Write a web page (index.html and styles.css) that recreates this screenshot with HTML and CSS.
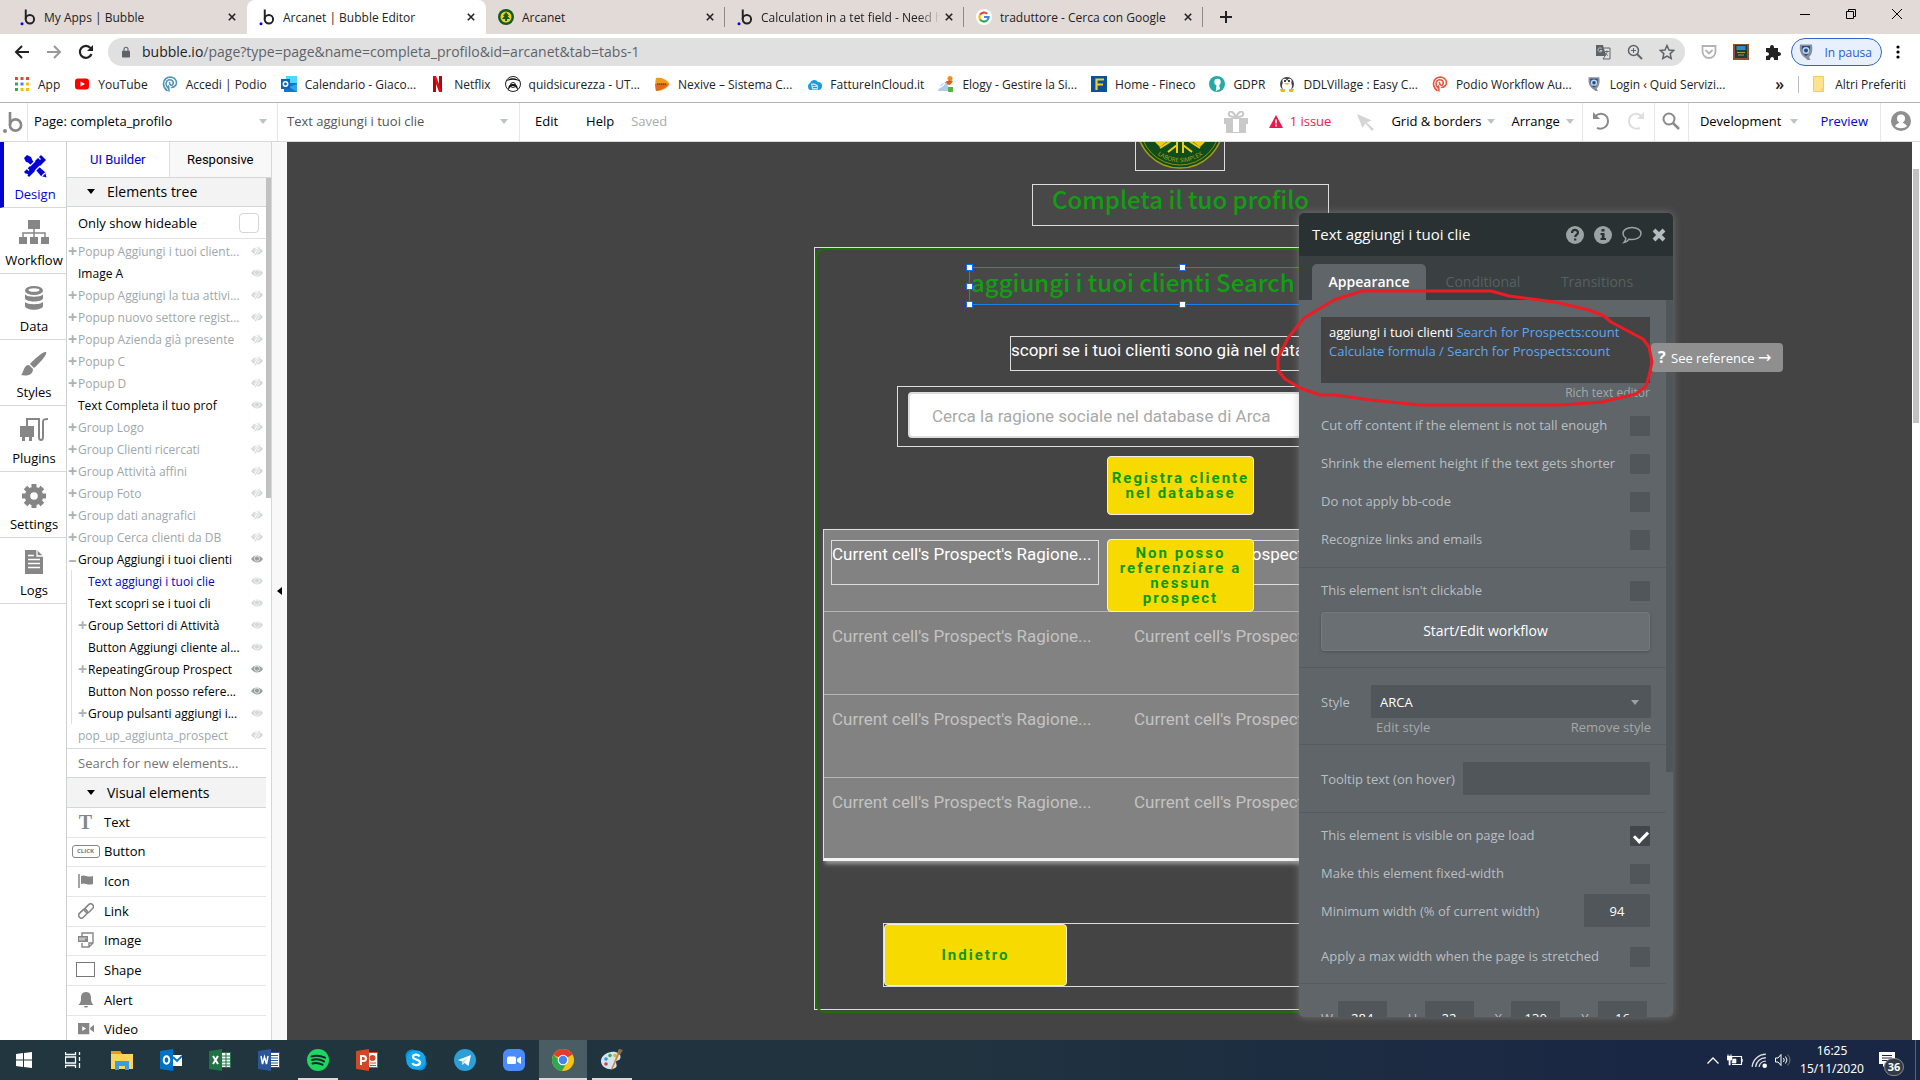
FILE: index.html
```html
<!DOCTYPE html>
<html lang="it">
<head>
  <meta charset="UTF-8">
  <meta name="viewport" content="width=device-width, initial-scale=1.0">
  <title>Arcanet | Bubble Editor</title>
  <link rel="stylesheet" href="styles.css">
</head>
<body>

  <!-- shared icons -->
  <svg class="sprite" width="0" height="0">
    <symbol id="eye" viewBox="0 0 12 8"><path d="M0 4Q2.500.500 6 .5T12 4Q9.500 7.500 6 7.500T0 4Z" fill="currentColor"/><circle cx="6" cy="3.600" r="2.600" fill="none" stroke="#fff" stroke-width=".7"/></symbol>
    <symbol id="eye-off" viewBox="0 0 12 10"><path d="M0 5Q2.500 1.500 6 1.500T12 5Q9.500 8.500 6 8.500T0 5Z" fill="currentColor"/><circle cx="6" cy="4.600" r="2.300" fill="none" stroke="#fff" stroke-width=".8"/><path d="M3.500 10 8.500 0" stroke="#fff" stroke-width="2"/><path d="M4 9.500 8.500.5" stroke="currentColor"/></symbol>
    <symbol id="bubble" viewBox="0 0 20 24"><path d="M7 2v13" stroke="currentColor" stroke-width="2.600" fill="none"/><circle cx="12.500" cy="15" r="5.600" stroke="currentColor" stroke-width="2.600" fill="none"/></symbol>
    <symbol id="podio" viewBox="0 0 16 16"><path d="M5 14.500C.5 11 .5 5 4 2.500S12.500 1 14 4.500 13 11.500 9.500 11.500M6 12C3 9 3.500 5 6.500 4S12 5.500 11 8 7.500 9 7.500 6.500M7 15l-.5-5" fill="none" stroke="currentColor" stroke-width="1.600" stroke-linecap="round"/></symbol>
    <symbol id="shield" viewBox="0 0 16 18"><path d="M2 1.500h12c1 7-.5 10.500-3 12.500l1.500 3h-3L8 15.500C3 12.500 1 8 2 1.500Z" fill="#8a8f96"/><path d="M4 3h8c.5 5-.5 7.500-4 10C4.500 10.500 3.500 8 4 3Z" fill="#2b4a86"/><circle cx="8" cy="7.500" r="2.800" fill="none" stroke="#b8d8f4" stroke-width="1.600"/></symbol>
  </svg>

  <!-- browser -->
  <header class="browser">
    <div class="tab-strip">
      <div class="tab">
        <svg class="fav dark" viewBox="0 0 20 24"><use href="#bubble"/><circle cx="2" cy="21" r="2" fill="#00f"/></svg>
        <span class="tab-title">My Apps | Bubble</span>
        <button class="tab-close" aria-label="Chiudi"><svg viewBox="0 0 10 10"><path d="m1 1 8 8m0-8-8 8"/></svg></button>
      </div>
      <div class="tab active">
        <svg class="fav dark" viewBox="0 0 20 24"><use href="#bubble"/><circle cx="2" cy="21" r="2" fill="#00f"/></svg>
        <span class="tab-title">Arcanet | Bubble Editor</span>
        <button class="tab-close" aria-label="Chiudi"><svg viewBox="0 0 10 10"><path d="m1 1 8 8m0-8-8 8"/></svg></button>
      </div>
      <div class="tab line">
        <svg class="fav" viewBox="0 0 16 16"><circle cx="8" cy="8" r="8" fill="#155a24"/><circle cx="8" cy="8" r="5.500" fill="#f2cf1d"/><path d="M8 3 5 7h1.500L4 10h3v2h2v-2h3L9.500 7H11Z" fill="#155a24"/></svg>
        <span class="tab-title">Arcanet</span>
        <button class="tab-close" aria-label="Chiudi"><svg viewBox="0 0 10 10"><path d="m1 1 8 8m0-8-8 8"/></svg></button>
      </div>
      <div class="tab line">
        <svg class="fav dark" viewBox="0 0 20 24"><use href="#bubble"/><circle cx="2" cy="21" r="2" fill="#00f"/></svg>
        <span class="tab-title fade">Calculation in a tet field - Need h</span>
        <button class="tab-close" aria-label="Chiudi"><svg viewBox="0 0 10 10"><path d="m1 1 8 8m0-8-8 8"/></svg></button>
      </div>
      <div class="tab line">
        <svg class="fav" viewBox="0 0 16 16"><circle cx="8" cy="8" r="8" fill="#fff"/><g fill="none" stroke-width="2.200"><path d="M11.200 4.800A4.600 4.600 0 0 0 4 5.800" stroke="#ea4335"/><path d="M4 5.800a4.600 4.600 0 0 0 0 4.400" stroke="#fbbc05"/><path d="M4 10.200a4.600 4.600 0 0 0 7 1.200" stroke="#34a853"/><path d="M11 11.400A4.600 4.600 0 0 0 12.600 8H8" stroke="#4285f4"/></g></svg>
        <span class="tab-title">traduttore - Cerca con Google</span>
        <button class="tab-close" aria-label="Chiudi"><svg viewBox="0 0 10 10"><path d="m1 1 8 8m0-8-8 8"/></svg></button>
      </div>
      <button class="new-tab" aria-label="Nuova scheda"><svg viewBox="0 0 12 12"><path d="M6 0v12M0 6h12" stroke="#222" stroke-width="2"/></svg></button>
      <div class="window-buttons">
        <button aria-label="Riduci"><svg viewBox="0 0 10 10"><path d="M0 5.500h10"/></svg></button>
        <button aria-label="Ripristina"><svg viewBox="0 0 10 10"><path d="M.5 2.500h7v7h-7ZM2.500 2.500v-2h7v7h-2"/></svg></button>
        <button aria-label="Chiudi"><svg viewBox="0 0 10 10"><path d="m0 0 10 10M10 0 0 10"/></svg></button>
      </div>
    </div>

    <div class="address-row">
      <button class="nav" aria-label="Indietro"><svg viewBox="0 0 16 16"><path d="M15 8H2m6-6L2 8l6 6" fill="none" stroke="#222" stroke-width="2"/></svg></button>
      <button class="nav" aria-label="Avanti"><svg viewBox="0 0 16 16"><path d="M1 8h13M8 2l6 6-6 6" fill="none" stroke="#999" stroke-width="2"/></svg></button>
      <button class="nav" aria-label="Ricarica"><svg viewBox="0 0 16 16"><path d="M13.500 10A6 6 0 1 1 12.500 4" fill="none" stroke="#222" stroke-width="2.200"/><path d="M15 1v6H9Z" fill="#222"/></svg></button>
      <div class="omnibox">
        <svg class="lock" viewBox="0 0 10 14"><path d="M1 5.500h8c.6 0 1 .4 1 1V13c0 .6-.4 1-1 1H1c-.6 0-1-.4-1-1V6.500c0-.6.4-1 1-1Z" fill="#5f6368"/><path d="M2.500 6V3.500a2.500 2.500 0 0 1 5 0V6" fill="none" stroke="#5f6368" stroke-width="1.400"/></svg>
        <p class="url"><b>bubble.io</b>/page?type=page&amp;name=completa_profilo&amp;id=arcanet&amp;tab=tabs-1</p>
        <svg class="ico16" viewBox="0 0 16 16"><path d="M1 1h7l3 11H1Z" fill="#5f6368"/><path d="M9 4h6v11H8l2-3" fill="none" stroke="#5f6368"/><path d="M6.500 4.500a2 2 0 1 0 .5 2H5" fill="none" stroke="#ccc" stroke-width=".9"/><path d="M9.500 7.500H14M12 6.500v1c0 2-1 3-2 4m0-3c1 2 2 2.500 3 3" fill="none" stroke="#5f6368" stroke-width=".9"/></svg>
        <svg class="ico16" viewBox="0 0 16 16"><circle cx="6.500" cy="6.500" r="5" fill="none" stroke="#5f6368" stroke-width="1.500"/><path d="m10 10 5 5" stroke="#5f6368" stroke-width="2"/><path d="M6.500 4v5M4 6.500h5" stroke="#5f6368"/></svg>
        <svg class="ico16" viewBox="0 0 16 16"><path d="m8 1.500 2 4.500 4.800.4-3.600 3.200 1 4.900L8 12l-4.200 2.500 1-4.900L1.200 6.400 6 6Z" fill="none" stroke="#5f6368" stroke-width="1.500"/></svg>
      </div>
      <svg class="ico16 ext" viewBox="0 0 16 16"><path d="M1.500 2h13v5.500a6.500 6.500 0 0 1-13 0Z" fill="none" stroke="#b3b3b3" stroke-width="1.800"/><path d="m4.500 6 3.500 3.500L11.500 6" fill="none" stroke="#b3b3b3" stroke-width="1.800"/></svg>
      <svg class="ico16 ext" viewBox="0 0 16 16"><path d="M0 0h16v16H0Z" fill="#8d5427"/><path d="M2 1h12v13H2Z" fill="#1d3b45"/><path d="M3.500 2h9v4h-9Z" fill="#2e8cc4"/><path d="M4 8.500h8M5 11h6" stroke="#b89a2c"/></svg>
      <svg class="ico16 ext" viewBox="0 0 16 16"><path d="M1 4h4c-.5-4 4.500-4 4 0h4v4c4-.5 4 4.500 0 4v4H9c.5-4-4-4-4 0H1v-4c4 0 4-4 0-4Z" fill="#222"/></svg>
      <button class="profile"><svg viewBox="0 0 16 18"><use href="#shield"/></svg>In pausa</button>
      <button class="dots" aria-label="Menu"><svg viewBox="0 0 4 14"><circle cx="2" cy="2" r="1.600"/><circle cx="2" cy="7" r="1.600"/><circle cx="2" cy="12" r="1.600"/></svg></button>
    </div>

    <nav class="bookmarks">
      <a href="#"><svg viewBox="0 0 16 16"><g fill="#ea4335"><path d="M1 1h3v3H1zM6.500 1h3v3h-3zM12 1h3v3h-3z"/></g><path d="M1 6.500h3v3H1zM1 12h3v3H1z" fill="#34a853"/><path d="M6.500 6.500h3v3h-3z" fill="#4285f4"/><path d="M12 6.500h3v3h-3zM6.500 12h3v3h-3zM12 12h3v3h-3z" fill="#fbbc05"/></svg>App</a>
      <a href="#"><svg viewBox="0 0 16 16"><rect y="2.500" x="1" width="14" height="11" rx="3" fill="#f00"/><path d="m6.500 5.500 4.500 2.500-4.500 2.500Z" fill="#fff"/></svg>YouTube</a>
      <a href="#" class="podio-blue"><svg viewBox="0 0 16 16"><use href="#podio"/></svg>Accedi | Podio</a>
      <a href="#"><svg viewBox="0 0 16 16"><path d="M5 0h11v8H5Z" fill="#50d9ff"/><path d="M3 7h13v9H3Z" fill="#1473c6"/><path d="M16 8v8L8 11Z" fill="#28a8ea"/><path d="M0 3h9v10H0Z" fill="#0f64b5"/><circle cx="4.500" cy="8" r="2.200" fill="none" stroke="#fff" stroke-width="1.500"/></svg>Calendario - Giaco...</a>
      <a href="#"><svg viewBox="0 0 16 16"><path d="M3 0h3v16H3zM9 0h3v16H9z" fill="#b1060f"/><path d="M3 0h3l6 16H9Z" fill="#e50914"/></svg>Netflix</a>
      <a href="#"><svg viewBox="0 0 16 16"><circle cx="8" cy="8" r="7.500" fill="#fff" stroke="#222"/><path d="M1 6C3 1 13 1 15 6c-3-3-11-3-14 0ZM3 15c0-6 2-7 5-7s5 1 5 7c-1-3-3-5-5-5s-4 2-5 5Z" fill="#111"/><circle cx="8" cy="9" r="2.500" fill="none" stroke="#222"/></svg>quidsicurezza - UT...</a>
      <a href="#"><svg viewBox="0 0 16 16"><path d="M2 2c5-1 10 1 13 5v2c-3 4-8 6-13 6C1 10 1 6 2 2Z" fill="#f39a1e"/><path d="M1 8h14c-3 4-8 6-13 7Z" fill="#dd6a1e"/><path d="M3 8h9" stroke="#7b3b10" stroke-width="1.500" stroke-dasharray="1.500 .5"/></svg>Nexive – Sistema C...</a>
      <a href="#"><svg viewBox="0 0 16 16"><path d="M4 14a4 4 0 0 1 0-7 4.500 4.500 0 0 1 8-1 4 4 0 0 1 0 8Z" fill="#1b9cdc"/><path d="M5 7.500h4l3 2v4H6Z" fill="#bfe5f7"/><path d="M6.500 9.500h3M7 11.500h4" stroke="#1b9cdc"/></svg>FattureInCloud.it</a>
      <a href="#"><svg viewBox="0 0 16 16"><circle cx="12" cy="2.500" r="2.500" fill="#f58a1f"/><path d="M6 8c2-4 6-4 9-3l-3 4Z" fill="#e05a1a"/><path d="M0 15c2-7 5-9 9-8l2 8Z" fill="#a9cdea"/><path d="M1 12c4-2 5-3 6-5" stroke="#fff" stroke-width="1.500" fill="none"/><path d="M10 11h5v5h-5Z" fill="#56b33c"/></svg>Elogy - Gestire la Si...</a>
      <a href="#"><svg viewBox="0 0 16 16"><path d="M0 0h16v16H0Z" fill="#0b509b"/><path d="M5.500 14V3.500H13M5.500 8.500H12" fill="none" stroke="#f6cf1c" stroke-width="2.200"/></svg>Home - Fineco</a>
      <a href="#"><svg viewBox="0 0 16 16"><circle cx="8" cy="8" r="8" fill="#27a9a5"/><circle cx="8.500" cy="6" r="3.200" fill="#fff"/><path d="M7.500 8h2.500l1 5-4 2Z" fill="#fff"/></svg>GDPR</a>
      <a href="#"><svg viewBox="0 0 16 16"><circle cx="8" cy="8" r="7" fill="#444"/><ellipse cx="8" cy="10" rx="5" ry="5.500" fill="#fff"/><circle cx="5.500" cy="5" r="2.200" fill="#fff"/><circle cx="10.500" cy="5" r="2.200" fill="#fff"/><circle cx="6" cy="5" r="1"/><circle cx="10" cy="5" r="1"/><path d="M5 7h6l-3 2ZM1 13h5v3H2ZM10 13h5l-1 3h-4Z" fill="#e9b81c"/></svg>DDLVillage : Easy C...</a>
      <a href="#" class="podio-red"><svg viewBox="0 0 16 16"><use href="#podio"/></svg>Podio Workflow Au...</a>
      <a href="#"><svg viewBox="0 0 16 18"><use href="#shield"/></svg>Login ‹ Quid Servizi...</a>
      <span class="more">»</span>
      <a href="#" class="folder"><svg viewBox="0 0 16 16"><path d="M2 0h11v16H2Z" fill="#ffe48d"/><path d="M2.500.5h10v15h-10zM11 12v3" fill="none" stroke="#f0cd5c"/></svg>Altri Preferiti</a>
    </nav>
  </header>

  <!-- bubble top bar -->
  <div class="topbar">
    <a class="logo" href="#" aria-label="Bubble"><svg viewBox="0 0 20 24"><use href="#bubble"/><circle cx="2" cy="21" r="2" fill="currentColor"/></svg></a>
    <button class="picker">Page: completa_profilo<i class="caret"></i></button>
    <button class="picker grey second">Text aggiungi i tuoi clie<i class="caret"></i></button>
    <button class="menu edit">Edit</button>
    <button class="menu">Help</button>
    <span class="saved">Saved</span>
    <div class="topbar-right">
      <svg class="gift" viewBox="0 0 24 22"><path d="M0 7h24v6h-2v9H2v-9H0Z" fill="#c9c9c9"/><path d="M9 8h1v13H9zM14 8h1v13h-1zM10 8h4v13h-4z" fill="#fff"/><path d="M11.500 6C7 6 4 5 5 2s5-1 7 4c2-5 6-7 7-4s-2 4-6.500 4" fill="none" stroke="#c9c9c9" stroke-width="2"/></svg>
      <button class="issue"><svg viewBox="0 0 14 13"><path d="m7 0 7 13H0Z" fill="#f0164c"/><path d="M7 4.500v4M7 9.500v2" stroke="#fff" stroke-width="1.600"/></svg>1 issue</button>
      <svg class="pointer" viewBox="0 0 16 16"><path d="m0 0 14 6-5 2 7 6-2 2-6-7-3 4Z" fill="#d5d5d5"/></svg>
      <button class="menu with-caret">Grid &amp; borders<i class="caret"></i></button>
      <button class="menu with-caret arrange">Arrange<i class="caret"></i></button>
      <button class="cell undo" aria-label="Undo"><svg viewBox="0 0 18 20"><path d="M3 5.500C9 0 16 4 16 10s-6 9-11 7" fill="none" stroke="#8a8a8a" stroke-width="2"/><path d="M1 1v7h7Z" fill="#8a8a8a"/></svg></button>
      <button class="redo" aria-label="Redo"><svg viewBox="0 0 18 20"><path d="M15 5.500C9 0 2 4 2 10s6 9 11 7" fill="none" stroke="#ddd" stroke-width="2"/><path d="M17 1v7h-7Z" fill="#ddd"/></svg></button>
      <button class="cell search" aria-label="Search"><svg viewBox="0 0 18 18"><circle cx="7" cy="7" r="5.500" fill="none" stroke="#8a8a8a" stroke-width="2"/><path d="m11 11 6 6" stroke="#8a8a8a" stroke-width="2.500"/></svg></button>
      <button class="cell with-caret dev">Development<i class="caret"></i></button>
      <a class="preview" href="#">Preview</a>
      <button class="cell avatar" aria-label="Account"><svg viewBox="0 0 20 20"><circle cx="10" cy="10" r="10" fill="#8f8f8f"/><circle cx="10" cy="7.500" r="4" fill="#fff"/><path d="M4 15c1-2 4-2.500 4.500-4h3c.5 1.500 3.500 2 4.500 4-3 3-9 3-12 0Z" fill="#fff"/></svg></button>
    </div>
  </div>

  <main class="editor">
    <nav class="rail">
      <a href="#" class="on"><svg viewBox="0 0 24 24" fill="#0202d2"><path d="m18 1 5 5L6 23l-5-5Z"/><path d="m1 4 3-3 4 2 1.500 3.500L12 9l3 3 7 6 1.500 5.500L18 22l-6-7-3-3-4-3.500L3 8Z"/><path d="m15 3 2.500 2.500M4 14.500 6 16.500M7 12l5-5m0 10 5-5M19 22l3-3M3 20l2 1" stroke="#fff" stroke-width="1.200"/></svg>Design</a>
      <a href="#"><svg viewBox="0 0 30 24" fill="#868686"><path d="M9 0h12v9H9zM0 17h8v7H0zM11 17h8v7h-8zM22 17h8v7h-8z"/><path d="M15 9v8M4 17v-4h22v4" fill="none" stroke="#868686" stroke-width="1.500"/></svg>Workflow</a>
      <a href="#"><svg viewBox="2 0 24 24" fill="#868686"><ellipse cx="14" cy="4.500" rx="9" ry="4.500"/><ellipse cx="14" cy="4" rx="5.500" ry="1.800" fill="#fff"/><path d="M5 8.500c3 3 15 3 18 0v4c-1 4-17 4-18 0zM5 16c3 3 15 3 18 0v4c-1 5-17 5-18 0z"/></svg>Data</a>
      <a href="#"><svg viewBox="0 0 26 24" fill="#868686"><path d="M25 0c2 2-7 12-12 16l-4-4C13 7 23-1 25 0ZM8 13l4 4c0 7-8 7-12 6 3-2 2-10 8-10Z"/></svg>Styles</a>
      <a href="#"><svg viewBox="0 0 28 24" fill="#868686"><path d="M0 8h14v11H0zM2 18h3v5H2zM9 18h3v5H9z"/><path d="M7 8V1h12v18c0 4 4 4 4 0V4c0-3 2-3 5-3" fill="none" stroke="#868686" stroke-width="2"/></svg>Plugins</a>
      <a href="#"><svg viewBox="0 0 24 24"><circle cx="12" cy="12" r="6.500" fill="none" stroke="#868686" stroke-width="5.500"/><path d="M12 0v4M12 20v4M0 12h4M20 12h4M3.500 3.500l3 3M17.500 17.500l3 3M3.500 20.500l3-3M17.500 6.500l3-3" stroke="#868686" stroke-width="5"/></svg>Settings</a>
      <a href="#"><svg viewBox="0 0 24 24"><path d="M3 0h12l6 6v18H3Z" fill="#868686"/><path d="M15 0v6h6M6 9.500h12M6 13.500h12M6 17.500h12M6 5.500h6" fill="none" stroke="#fff" stroke-width="1.300"/></svg>Logs</a>
    </nav>

    <aside class="side">
      <div class="side-tabs">
        <button class="on">UI Builder</button>
        <button>Responsive</button>
      </div>
      <div class="side-scroll">
        <h2><i class="caret black"></i>Elements tree</h2>
        <label class="hideable">Only show hideable<input type="checkbox"></label>
        <ul class="tree">
          <li class="off"><b>+</b><span>Popup Aggiungi i tuoi client...</span><svg><use href="#eye-off"/></svg></li>
          <li><b></b><span>Image A</span><svg><use href="#eye"/></svg></li>
          <li class="off"><b>+</b><span>Popup Aggiungi la tua attivi...</span><svg><use href="#eye-off"/></svg></li>
          <li class="off"><b>+</b><span>Popup nuovo settore regist...</span><svg><use href="#eye-off"/></svg></li>
          <li class="off"><b>+</b><span>Popup Azienda già presente</span><svg><use href="#eye-off"/></svg></li>
          <li class="off"><b>+</b><span>Popup C</span><svg><use href="#eye-off"/></svg></li>
          <li class="off"><b>+</b><span>Popup D</span><svg><use href="#eye-off"/></svg></li>
          <li><b></b><span>Text Completa il tuo prof</span><svg><use href="#eye"/></svg></li>
          <li class="off"><b>+</b><span>Group Logo</span><svg><use href="#eye-off"/></svg></li>
          <li class="off"><b>+</b><span>Group Clienti ricercati</span><svg><use href="#eye-off"/></svg></li>
          <li class="off"><b>+</b><span>Group Attività affini</span><svg><use href="#eye-off"/></svg></li>
          <li class="off"><b>+</b><span>Group Foto</span><svg><use href="#eye-off"/></svg></li>
          <li class="off"><b>+</b><span>Group dati anagrafici</span><svg><use href="#eye-off"/></svg></li>
          <li class="off"><b>+</b><span>Group Cerca clienti da DB</span><svg><use href="#eye-off"/></svg></li>
          <li class="shown"><b>–</b><span>Group Aggiungi i tuoi clienti</span><svg><use href="#eye"/></svg></li>
          <li class="child current"><b></b><span>Text aggiungi i tuoi clie</span><svg><use href="#eye"/></svg></li>
          <li class="child"><b></b><span>Text scopri se i tuoi cli</span><svg><use href="#eye"/></svg></li>
          <li class="child"><b>+</b><span>Group Settori di Attività</span><svg><use href="#eye"/></svg></li>
          <li class="child"><b></b><span>Button Aggiungi cliente al...</span><svg><use href="#eye"/></svg></li>
          <li class="child shown"><b>+</b><span>RepeatingGroup Prospect</span><svg><use href="#eye"/></svg></li>
          <li class="child shown"><b></b><span>Button Non posso refere...</span><svg><use href="#eye"/></svg></li>
          <li class="child"><b>+</b><span>Group pulsanti aggiungi i...</span><svg><use href="#eye"/></svg></li>
          <li class="off"><b></b><span>pop_up_aggiunta_prospect</span><svg><use href="#eye-off"/></svg></li>
        </ul>
        <input class="find" type="text" placeholder="Search for new elements..." aria-label="Search for new elements">
        <h2><i class="caret black"></i>Visual elements</h2>
        <ul class="palette">
          <li><span class="glyph-t">T</span>Text</li>
          <li><span class="glyph-click">CLICK</span>Button</li>
          <li><svg viewBox="0 0 16 14"><path d="M1 0v14" stroke="#868686" stroke-width="1.500"/><path d="M3 2c4-2 6 2 12 0v8c-6 2-8-2-12 0Z" fill="#868686"/></svg>Icon</li>
          <li><svg viewBox="0 0 16 16"><g fill="none" stroke="#868686" stroke-width="1.600"><rect x="6" y="2.500" width="10" height="5.500" rx="2.700" transform="rotate(-45 11 5.200)"/><rect x="0" y="8" width="10" height="5.500" rx="2.700" transform="rotate(-45 5 10.700)"/></g></svg>Link</li>
          <li><svg viewBox="0 0 16 16"><path d="M4 4V1h11v10l-4 4H4v-4M15 11h-4v4" fill="none" stroke="#868686" stroke-width="1.400"/><path d="M0 4h10v6H0Z" fill="#868686"/><path d="M2 5.500v3m2-3v3m2-3v3m2-3v1" stroke="#fff"/></svg>Image</li>
          <li><span class="glyph-box"></span>Shape</li>
          <li><svg viewBox="0 0 16 16"><path d="M8 0c4 0 5 3 5 6 0 4 1 5 2.500 7H.5C2 11 3 10 3 6c0-3 1-6 5-6ZM6 14h4c0 2-4 2-4 0Z" fill="#868686"/></svg>Alert</li>
          <li><svg viewBox="0 0 17 14"><path d="M0 1h12v12H0zM13 6l4-3v8l-4-3Z" fill="#868686"/><path d="m4.500 4.500 4 2.500-4 2.500Z" fill="#fff"/></svg>Video</li>
        </ul>
      </div>
    </aside>
    <button class="collapse" aria-label="Collapse"></button>

    <section class="canvas">
      <!-- page elements, placed freely -->
      <div class="el box-logo">
        <svg viewBox="0 0 88 88"><circle cx="44" cy="44" r="43" fill="#0f4d1c" stroke="#a89a12" stroke-width="1.500"/><circle cx="44" cy="44" r="40" fill="none" stroke="#8f8d14"/><path d="M18 60h14l-8 6ZM70 60H56l8 6Z" fill="#f2c914"/><path d="M41 58v14M47 58v14M41 64l-9 7m15-7 9 7M38 58l-14 9m26-9 14 9" stroke="#f2c914" stroke-width="2" fill="none"/><path id="motto" d="M11 62a38 38 0 0 0 66 0" fill="none"/><text><textPath href="#motto" startOffset="50%">LABORE SIMPLEX</textPath></text></svg>
      </div>
      <h1 class="el box-title">Completa il tuo profilo</h1>
      <div class="el box-group"></div>
      <div class="el box-selected">aggiungi i tuoi clienti Search f
        <i class="knob nw"></i><i class="knob n"></i><i class="knob w"></i><i class="knob sw"></i><i class="knob s"></i>
      </div>
      <p class="el box-scopri">scopri se i tuoi clienti sono già nel data</p>
      <div class="el box-search"><input type="text" placeholder="Cerca la ragione sociale nel database di Arca" aria-label="Cerca"></div>
      <button class="el yellow box-registra">Registra cliente nel database</button>
      <div class="el box-repeat">
        <div class="cells first"><p>Current cell's Prospect's Ragione...</p><p>Current cell's Prospect's Ragione...</p></div>
        <div class="cells"><p>Current cell's Prospect's Ragione...</p><p>Current cell's Prospect's Ragione...</p></div>
        <div class="cells"><p>Current cell's Prospect's Ragione...</p><p>Current cell's Prospect's Ragione...</p></div>
        <div class="cells"><p>Current cell's Prospect's Ragione...</p><p>Current cell's Prospect's Ragione...</p></div>
      </div>
      <button class="el yellow box-nonposso">Non posso referenziare a nessun prospect</button>
      <div class="el box-actions"><button class="yellow">Indietro</button></div>

      <!-- property editor -->
      <section class="props">
        <header>
          <h3>Text aggiungi i tuoi clie</h3>
          <svg viewBox="0 0 18 18"><circle cx="9" cy="9" r="9" fill="#9ba3a6"/><path d="M6 7c0-4 6-4 6-.5C12 9 9.200 8.500 9.200 11M9.200 12.500v2" fill="none" stroke="#293133" stroke-width="2.200"/></svg>
          <svg viewBox="0 0 18 18"><circle cx="9" cy="9" r="9" fill="#9ba3a6"/><path d="M7.500 3h3v2.500h-3zM6.500 7h4v5H12v2H6.500v-2h1.300V9H6.500Z" fill="#293133"/></svg>
          <svg class="balloon" viewBox="0 0 20 18"><path d="M10 1.500c5 0 9 2.500 9 6s-4 6-9 6c-1 0-2 0-3-.3-1 1.800-3 3-5 3.300 1-1 1.800-2.500 1.800-4.300C2 11 1 9.500 1 7.500c0-3.500 4-6 9-6Z" fill="none" stroke="#9ba3a6" stroke-width="1.500"/></svg>
          <button aria-label="Close"><svg viewBox="0 0 14 14"><path d="m2 2 10 10M12 2 2 12" stroke="#b5bcbf" stroke-width="4"/></svg></button>
        </header>
        <div class="props-tabs">
          <button class="on">Appearance</button>
          <button>Conditional</button>
          <button>Transitions</button>
        </div>
        <div class="props-body">
          <div class="group">
            <div class="composer" role="textbox" contenteditable="true" spellcheck="false">aggiungi i tuoi clienti <span>Search for Prospects:count<br>Calculate formula / Search for Prospects:count</span></div>
            <a class="rich" href="#">Rich text editor</a>
            <label class="row">Cut off content if the element is not tall enough<input type="checkbox"></label>
            <label class="row">Shrink the element height if the text gets shorter<input type="checkbox"></label>
            <label class="row">Do not apply bb-code<input type="checkbox"></label>
            <label class="row">Recognize links and emails<input type="checkbox"></label>
          </div>
          <div class="group click">
            <label class="row">This element isn't clickable<input type="checkbox"></label>
            <button class="workflow">Start/Edit workflow</button>
          </div>
          <div class="group style">
            <div class="field"><label for="style">Style</label>
              <span class="select"><select id="style"><option>ARCA</option></select><i class="caret"></i></span></div>
            <div class="links"><a href="#">Edit style</a><a href="#">Remove style</a></div>
          </div>
          <div class="group tooltip">
            <div class="field"><label for="tip">Tooltip text (on hover)</label><input id="tip" type="text"></div>
          </div>
          <div class="group visible">
            <label class="row">This element is visible on page load<input type="checkbox" checked></label>
            <label class="row">Make this element fixed-width<input type="checkbox"></label>
            <label class="row">Minimum width (% of current width)<input type="text" value="94"></label>
            <label class="row last">Apply a max width when the page is stretched<input type="checkbox"></label>
          </div>
          <div class="group size">
            <label>W<input type="text" value="284"></label>
            <label>H<input type="text" value="22"></label>
            <label>X<input type="text" value="130"></label>
            <label>Y<input type="text" value="16"></label>
          </div>
        </div>
      </section>
      <a class="reference" href="#"><b>?</b> See reference <span>→</span></a>
      <!-- hand-drawn highlight -->
      <svg class="scribble" viewBox="0 0 380 124"><path d="M87 5h129l18 5 46 6 34 8 15 6 7 6 32 17 6 8 3 15-3 14-3 10-10 8-34 8-40 3H145l-50-5-35-5H45l-20-7-15-9-7-9V72l10-20 16-20 30-18Z" fill="none" stroke="#ed1c24" stroke-width="3" stroke-linejoin="round"/></svg>
    </section>
    <div class="page-scroll"><span></span></div>
  </main>

  <footer class="taskbar">
    <button aria-label="Start"><svg viewBox="0 0 16 16"><path d="m0 2 7-1v6.500H0zM8 1l8-1v7.500H8zM0 8.500h7V15l-7-1zM8 8.500h8V16l-8-1z" fill="#fff"/></svg></button>
    <button aria-label="Task view"><svg viewBox="0 0 16 16"><path d="M.5 0v2.500h10V0M.5 16v-2.500h10V16M.5 5h10v6H.5ZM14.500 0v3M14.500 5v4M14.500 11v5" fill="none" stroke="#fff" stroke-width="1.300"/></svg></button>
    <button aria-label="Explorer"><svg class="big" viewBox="0 0 22 20"><path d="M0 1h9l2 3h11v15H0Z" fill="#ffd45e"/><path d="M0 1h9l2 3H0Z" fill="#dba21a"/><path d="M4 20v-9h14v9h-4v-4H8v4Z" fill="#3d9be0"/></svg></button>
    <button aria-label="Outlook"><svg class="big" viewBox="0 0 22 22"><path d="M11 6h11v11H11Z" fill="#fff"/><path d="m13 8 4 4 5-5" fill="none" stroke="#0072c6" stroke-width="1.800"/><path d="m0 2 13-2v22L0 20Z" fill="#0072c6"/><ellipse cx="6.500" cy="11" rx="2.800" ry="3.700" fill="none" stroke="#fff" stroke-width="2"/></svg></button>
    <button aria-label="Excel"><svg class="big" viewBox="0 0 22 22"><path d="M12 3.500h9.500v15H12Z" fill="#fff" stroke="#217346"/><path d="M13 7h8M13 10h8M13 13h8M13 16h8M17 4v14" stroke="#217346"/><path d="m0 2 13-2v22L0 20Z" fill="#217346"/><path d="m4 7 5 8M9 7l-5 8" stroke="#fff" stroke-width="2"/></svg></button>
    <button aria-label="Word"><svg class="big" viewBox="0 0 22 22"><path d="M12 3.500h9.500v15H12Z" fill="#fff" stroke="#2b579a"/><path d="M13 6.500h7M13 9h7M13 11.500h7M13 14h7M13 16.500h7" stroke="#2b579a"/><path d="m0 2 13-2v22L0 20Z" fill="#2b579a"/><path d="m3 7 1.500 8L6.500 8l2 7L10 7" fill="none" stroke="#fff" stroke-width="1.500"/></svg></button>
    <button class="running" aria-label="Spotify"><svg class="big" viewBox="0 0 22 22"><circle cx="11" cy="11" r="11" fill="#1ed760"/><path d="M4.500 7.500c5-1.500 9-1 13.500 1.200M5 11c4-1.200 8-.8 12 1.400M5.500 14.500c4-1 6.500-.5 10 1.200" fill="none" stroke="#12252b" stroke-width="2" stroke-linecap="round"/></svg></button>
    <button aria-label="PowerPoint"><svg class="big" viewBox="0 0 22 22"><path d="M12 3.500h9.500v15H12Z" fill="#fff" stroke="#d24726"/><circle cx="16.500" cy="9" r="3" fill="#d24726"/><path d="M14 14h6M14 16.500h6" stroke="#d24726"/><path d="m0 2 13-2v22L0 20Z" fill="#d24726"/><path d="M5 16V7h2c4 0 4 5 0 5H5" fill="none" stroke="#fff" stroke-width="2"/></svg></button>
    <button aria-label="Skype"><svg class="big" viewBox="0 0 22 22"><circle cx="7" cy="7" r="6.500" fill="#0a8fd6"/><circle cx="15" cy="15" r="6.500" fill="#0a8fd6"/><circle cx="11" cy="11" r="9.800" fill="#13a9ee"/><path d="M14.500 7.500c-1-2.500-6.500-2.500-6.500.5s7 2 7 5.500-6.500 3.500-7.500.5" fill="none" stroke="#fff" stroke-width="2.300"/></svg></button>
    <button aria-label="Telegram"><svg class="big" viewBox="0 0 22 22"><circle cx="11" cy="11" r="11" fill="#2c9fd9"/><path d="m4 11 13-5-2.500 11-4-3-2 2-.5-3.500Z" fill="#fff"/><path d="m8 12.500 6-4-4 5-1.500 2.500Z" fill="#bcd9ea"/></svg></button>
    <button aria-label="Zoom"><svg class="big" viewBox="0 0 22 22"><rect width="22" height="22" rx="6" fill="#4a8cff"/><rect x="4" y="7.500" width="9" height="7.500" rx="1.500" fill="#fff"/><path d="m14 10 4-2.500V15l-4-2.500Z" fill="#fff"/></svg></button>
    <button class="running focus" aria-label="Chrome"><svg class="big" viewBox="0 0 22 22"><circle cx="11" cy="11" r="11" fill="#fbc116"/><path d="M11 11 1.500 5.500a11 11 0 0 1 19 0Z" fill="#e33b2e"/><path d="M11 11H7L1.500 5.500A11 11 0 0 0 10 22l4.500-8Z" fill="#2da94f"/><circle cx="11" cy="11" r="5.300" fill="#fff"/><circle cx="11" cy="11" r="4.200" fill="#4285f4"/></svg></button>
    <button class="running" aria-label="Paint"><svg class="big" viewBox="0 0 22 22"><path d="M10 3c7-1 11 3 9 7-1 2-4 1-4 3s2 4-1 6c-5 3-13 0-14-6C-.5 8 4 4 10 3Z" fill="#cfe6f4"/><circle cx="5" cy="10" r="1.800" fill="#3c8fd6"/><circle cx="9" cy="6.500" r="1.800" fill="#45a845"/><circle cx="14" cy="6.500" r="1.800" fill="#e3b71c"/><circle cx="5" cy="15" r="1.800" fill="#d6423c"/><path d="m20 1-6 14-3 6-1-1 3-7 5-13Z" fill="#d98532"/><path d="m18 0 4 1-3 5-2-1Z" fill="#8b6a4c"/></svg></button>
    <div class="tray">
      <svg class="chev" viewBox="0 0 12 7"><path d="m.5 6.500 5.500-5.500 5.500 5.500" fill="none" stroke="#fff" stroke-width="1.300"/></svg>
      <svg viewBox="0 0 16 12"><path d="M5 2.500h9.500v8H5M16 5v3" fill="none" stroke="#fff" stroke-width="1.200"/><path d="M6 5h3v4H5ZM0 2h5v4H3.200v5H2V6H0ZM1 0v3M4 0v3" fill="#fff" stroke="#fff" stroke-width=".6"/></svg>
      <svg viewBox="0 0 14 14"><g fill="none" stroke="#ddd" stroke-width="1.200"><path d="M1 13A12 12 0 0 1 13 2M4 13a9 9 0 0 1 9-8M7 13a6 6 0 0 1 6-5"/></g><circle cx="12" cy="12" r="2" fill="#fff"/></svg>
      <svg viewBox="0 0 16 12"><path d="M.5 4v4H3l3 3.500V.5L3 4Z" fill="none" stroke="#fff"/><path d="M8.500 4q1.500 2 0 4M10.500 2.500q3 3.500 0 7" fill="none" stroke="#fff"/><path d="M12.500.5q5 5.500 0 11" fill="none" stroke="#778"/></svg>
      <p class="clock">16:25<br>15/11/2020</p>
      <div class="notes"><svg viewBox="0 0 16 16"><path d="M0 0h16v12H7l-3 3v-3H0Z" fill="#fff"/><path d="M3 3.500h10M3 6h10M3 8.500h10" stroke="#1a2744"/></svg><span>36</span></div>
    </div>
  </footer>
</body>
</html>
```
FILE: styles.css
```css
* {
  box-sizing: border-box;
}

body {
  margin: 0;
  height: 100vh;
  overflow: hidden;
  display: flex;
  flex-direction: column;
  font-family: "Open Sans", "Noto Sans", sans-serif;
  font-size: 13px;
  color: #000;
  background: #fff;
}

button {
  border: none;
  background: none;
  padding: 0;
  margin: 0;
  font: inherit;
  color: inherit;
  white-space: nowrap;
}

input,
select {
  font: inherit;
  margin: 0;
}

a {
  color: inherit;
  text-decoration: none;
}

h1, h2, h3, p, ul {
  margin: 0;
  padding: 0;
  list-style: none;
  font-weight: 400;
}

svg {
  display: block;
  flex: none;
}

.sprite {
  position: absolute;
}

.caret {
  flex: none;
  border: 4px solid transparent;
  border-top: 5px solid #b9c3c8;
  border-bottom: 0;
}

.caret.black {
  border-top-color: #000;
}

/* Browser tabs */
.browser {
  font-size: 12px;
  border-bottom: 1px solid #b3b3b3;
}

.tab-strip {
  display: flex;
  height: 34px;
  padding-left: 8px;
  background: #e2dad7;
}

.tab {
  display: flex;
  align-items: center;
  width: 239px;
  padding: 0 6px 0 12px;
  position: relative;
}

.tab.active {
  background: #fff;
  border-radius: 8px 8px 0 0;
}

.tab.line::after {
  content: "";
  position: absolute;
  right: 0;
  top: 7px;
  height: 20px;
  border-right: 1px solid #8e8a88;
}

.fav {
  width: 16px;
  height: 18px;
  margin-right: 8px;
}

.dark {
  color: #222;
}

.tab-title {
  flex: 1;
  overflow: hidden;
  white-space: nowrap;
  color: #222;
}

.tab-title.fade {
  mask-image: linear-gradient(90deg, #000 88%, transparent);
}

.tab-close {
  width: 18px;
}

.tab-close svg {
  width: 8px;
  margin: auto;
  stroke: #222;
  stroke-width: 2;
}

.new-tab {
  width: 46px;
}

.new-tab svg {
  width: 12px;
  margin: auto;
}

.window-buttons {
  display: flex;
  margin-left: auto;
}

.window-buttons button {
  width: 46px;
  padding-bottom: 6px;
}

.window-buttons svg {
  width: 10px;
  margin: auto;
  fill: none;
  stroke: #000;
}

/* Address bar */
.address-row {
  display: flex;
  align-items: center;
  height: 36px;
  padding: 0 20px 0 6px;
}

.nav {
  width: 32px;
}

.nav svg {
  width: 16px;
  margin: auto;
}

.omnibox {
  flex: 1;
  display: flex;
  align-items: center;
  height: 28px;
  margin-left: 6px;
  padding: 0 10px 0 14px;
  border-radius: 14px;
  background: #e0e0e0;
}

.lock {
  width: 8px;
  height: 12px;
}

.url {
  flex: 1;
  margin-left: 12px;
  padding-bottom: 1px;
  font-size: 14px;
  color: #5f6368;
}

.url b {
  font-weight: 400;
  color: #222;
}

.ico16 {
  width: 16px;
  height: 16px;
  margin-left: 16px;
}

.profile {
  display: flex;
  align-items: center;
  gap: 10px;
  height: 28px;
  margin: 0 14px 0 10px;
  padding: 0 9px 0 6px;
  border: 1px solid #2a66cc;
  border-radius: 14px;
  background: #e8f0fe;
  color: #1d5fd0;
}

.profile svg {
  width: 16px;
}

.dots svg {
  width: 4px;
}

/* Bookmarks */
.bookmarks {
  display: flex;
  align-items: center;
  gap: 14px;
  height: 32px;
  padding: 0 14px;
  padding-bottom: 4px;
  color: #222;
  white-space: nowrap;
}

.bookmarks a {
  display: flex;
  align-items: center;
  gap: 8px;
}

.bookmarks svg {
  width: 16px;
  height: 16px;
}

.podio-blue svg {
  color: #4e94b8;
}

.podio-red svg {
  color: #e8563f;
}

.more {
  margin-left: auto;
  font-size: 16px;
  font-weight: 600;
}

.bookmarks .folder {
  padding-left: 12px;
  border-left: 1px solid #bbb;
}

/* Editor top bar */
.topbar {
  display: flex;
  align-items: stretch;
  height: 39px;
  border-bottom: 1px solid #d6dadb;
}

.logo {
  display: flex;
  align-items: center;
  width: 28px;
  padding-left: 3px;
  color: #888;
  border-right: 1px solid #e4e6e7;
}

.logo svg {
  width: 20px;
}

.topbar button,
.preview,
.saved {
  padding-bottom: 2px;
}

.picker {
  display: flex;
  align-items: center;
  justify-content: space-between;
  width: 250px;
  padding: 0 10px 0 6px;
  border-right: 1px solid #e4e6e7;
}

.picker.second {
  width: 242px;
  padding-left: 9px;
  padding-right: 11px;
}

.grey {
  color: #555;
}

.menu {
  padding: 0 0 0 28px;
}

.menu.edit {
  padding-left: 15px;
}

.saved {
  align-self: center;
  margin-left: 17px;
  color: #aaa;
}

.topbar-right {
  display: flex;
  align-items: center;
  margin-left: auto;
}

.topbar-right button {
  height: 100%;
}

.gift {
  width: 24px;
  margin-right: 21px;
}

.issue {
  display: flex;
  align-items: center;
  gap: 7px;
  color: #f0164c;
}

.issue svg {
  width: 14px;
}

.pointer {
  width: 17px;
  margin: 0 17px 0 26px;
}

.menu.with-caret {
  padding-left: 0;
}

.with-caret {
  display: flex;
  align-items: center;
  gap: 6px;
}

.menu.arrange {
  margin: 0 8px 0 16px;
}

.cell {
  border-left: 1px solid #e4e6e7;
}

.undo {
  width: 37px;
}

.redo {
  width: 35px;
}

.undo svg,
.redo svg,
.search svg {
  width: 18px;
  margin: auto;
}

.search {
  width: 34px;
}

.topbar .dev {
  padding: 0 20px 2px 11px;
  gap: 9px;
}

.preview {
  padding-left: 2px;
  padding-right: 12px;
  color: #0202d2;
}

.avatar {
  width: 40px;
}

.avatar svg {
  width: 20px;
  margin: auto;
}

/* Editor */
.editor {
  flex: 1;
  min-height: 0;
  display: flex;
}

.rail {
  width: 67px;
  border-right: 1px solid #ccd0d2;
}

.rail a {
  display: flex;
  flex-direction: column;
  align-items: center;
  gap: 6px;
  height: 66px;
  padding: 12px 0 0 2px;
  border-bottom: 1px solid #d5d8d9;
  line-height: 20px;
}

.rail svg {
  height: 24px;
}

.rail .on {
  padding-left: 0;
  color: #0202d2;
  border-left: 4px solid #0202d2;
}

.side {
  display: flex;
  flex-direction: column;
  flex: none;
  width: 205px;
  border-right: 1px solid #d5d8d9;
}

.side-tabs {
  display: flex;
  height: 36px;
  flex: none;
  border-bottom: 1px solid #d5d8d9;
  font-family: Roboto, sans-serif;
}

.side-tabs button {
  flex: 1;
  background: #f8f8f8;
  border-left: 1px solid #e2e2e2;
}

.side-tabs .on {
  background: #fff;
  border-left: none;
  color: #0202d2;
}

.side-scroll {
  flex: 1;
  min-height: 0;
  overflow: hidden;
  padding-right: 5px;
  /* scrollbar thumb */
  background: linear-gradient(#c1c1c1, #c1c1c1) right top / 5px 320px no-repeat;
}

.side h2 {
  display: flex;
  align-items: center;
  gap: 12px;
  height: 29px;
  padding: 0 0 1px 20px;
  font-size: 14px;
  background: #f3f3f3;
  border-bottom: 1px solid #d5d8d9;
}

.hideable {
  display: flex;
  align-items: center;
  justify-content: space-between;
  height: 32px;
  padding: 0 7px 0 11px;
  border-bottom: 1px solid #e0e0e0;
}

.hideable input {
  appearance: none;
  width: 20px;
  height: 20px;
  border: 1px solid #d5d5d5;
  border-radius: 4px;
}

.tree {
  padding: 1px 0 2px;
  font-size: 12px;
  border-bottom: 1px solid #d5d8d9;
}

.tree li {
  display: flex;
  align-items: center;
  height: 22px;
  padding-right: 3px;
  white-space: nowrap;
}

.tree b {
  width: 11px;
  text-align: center;
  font-size: 16px;
  line-height: 18px;
  color: #aab2b5;
}

.tree span {
  flex: 1;
}

.tree svg {
  width: 12px;
  height: 10px;
  color: #d5d8d9;
}

.tree .off {
  color: #9ea7aa;
}

.tree .shown svg {
  color: #9a9f9f;
}

.tree .child {
  margin-left: 4px;
  padding-left: 5px;
  border-left: 1px solid #e0e0e0;
}

.tree .current {
  color: #0202d2;
}

.find {
  display: block;
  width: 100%;
  height: 29px;
  padding: 0 11px;
  border: none;
  border-bottom: 1px solid #d5d8d9;
}

.find::placeholder {
  color: #757575;
}

.side .find + h2 {
  height: 30px;
}

.palette li {
  display: grid;
  grid-template-columns: 37px 1fr;
  align-items: center;
  height: 30px;
  padding-bottom: 2px;
  border-bottom: 1px solid #e4e6e7;
}

.palette li:nth-child(3n + 2) {
  height: 29px;
}

.palette svg,
.palette span {
  justify-self: center;
}

.palette svg {
  width: 16px;
}

.glyph-t {
  font: bold 20px/20px "Liberation Serif", serif;
  color: #868686;
}

.glyph-click {
  width: 28px;
  height: 13px;
  border: 1px solid #868686;
  border-radius: 3px;
  font-size: 6px;
  font-weight: 700;
  line-height: 11px;
  text-align: center;
  color: #777;
}

.glyph-box {
  width: 19px;
  height: 15px;
  border: 1px solid #777;
}

.collapse {
  display: flex;
  align-items: center;
  justify-content: center;
  flex: none;
  width: 15px;
  background: #f8f8f8;
}

.collapse::before {
  content: "";
  border: 4px solid transparent;
  border-right: 5px solid #000;
  border-left: 0;
}

/* Canvas */
.canvas {
  flex: 1;
  position: relative;
  overflow: hidden;
  background: #444;
}

.el {
  position: absolute;
  border: 1px solid #ddd;
}

.box-logo {
  left: 848px;
  top: -62px;
  width: 90px;
  height: 91px;
}

.box-logo svg {
  width: 88px;
  margin: auto;
}

.box-logo text {
  font-size: 6px;
  text-anchor: middle;
  fill: #b3ab1a;
}

.box-title,
.box-selected {
  font-family: "Noto Sans CJK SC", sans-serif;
  font-size: 24px;
  line-height: 27px;
  font-weight: 500;
  color: #119f11;
  white-space: nowrap;
}

.box-title {
  left: 745px;
  top: 42px;
  width: 297px;
  height: 42px;
  text-align: center;
  background: #484848;
}

.box-group {
  left: 527px;
  top: 105px;
  width: 733px;
  height: 763px;
}

.box-group::before {
  content: "";
  display: block;
  height: 100%;
  border: 2px solid #1a7300;
  border-radius: 10px;
}

.box-selected {
  left: 682px;
  top: 125px;
  width: 427px;
  height: 38px;
  padding-left: 1px;
  background: #484848;
  border-color: #1a80e6;
}

.knob {
  position: absolute;
  width: 7px;
  height: 7px;
  border: 1px solid #0a6cff;
  background: #fff;
}

.nw, .n { top: -4px; }
.sw, .s { bottom: -4px; }
.w { top: 15px; }
.nw, .w, .sw { left: -4px; }
.n, .s { left: 209px; }

.box-scopri,
.box-search,
.box-repeat {
  font-family: Roboto, sans-serif;
  font-size: 17px;
  color: #fff;
  white-space: nowrap;
}

.box-scopri {
  left: 723px;
  top: 194px;
  width: 341px;
  height: 35px;
  line-height: 26px;
  overflow: hidden;
}

.box-search {
  left: 610px;
  top: 244px;
  width: 560px;
  height: 61px;
  padding: 5px 10px;
}

.box-search input {
  width: 100%;
  height: 46px;
  padding: 2px 22px 0;
  border: 2px solid #ddd;
  border-radius: 4px;
  background: #fff;
}

.box-search input::placeholder {
  color: #a9a9a9;
}

.yellow {
  padding: 0;
  background: #f7da00;
  color: #0a9a10;
  border: 1px solid #eee;
  border-radius: 4px;
  font: 700 15px/15px Roboto, sans-serif;
  letter-spacing: 2px;
  white-space: normal;
  text-align: center;
}

.box-registra {
  left: 820px;
  top: 314px;
  width: 147px;
  height: 59px;
}

.box-nonposso {
  left: 820px;
  top: 397px;
  width: 147px;
  height: 73px;
  padding: 0 6px;
}

.box-repeat {
  left: 536px;
  top: 387px;
  width: 700px;
  height: 332px;
  background: #828282;
  border-bottom: 3px solid #f3f3f3;
  box-shadow: 2px 3px 4px #999;
}

.cells {
  display: flex;
  gap: 34px;
  height: 83px;
  padding: 10px 7px;
  border-bottom: 1px solid #b5b5b5;
  color: #c3c3c3;
}

.cells:last-child {
  border-bottom: none;
}

.cells p {
  width: 268px;
  height: 45px;
  line-height: 26px;
  border: 1px solid transparent;
  overflow: hidden;
}

.cells.first {
  height: 82px;
  color: #fff;
}

.cells.first p {
  border-color: #ddd;
}

.box-actions {
  left: 596px;
  top: 781px;
  width: 560px;
  height: 64px;
}

.box-actions button {
  width: 183px;
  height: 62px;
}

/* Property editor */
.props {
  position: absolute;
  left: 1012px;
  top: 71px;
  bottom: 23px;
  width: 374px;
  display: flex;
  flex-direction: column;
  overflow: hidden;
  border-radius: 5px;
  background: #5f6569;
  color: #b9bfc1;
  box-shadow: 0 0 8px rgba(160, 160, 160, 0.5);
}

.props header {
  display: flex;
  align-items: center;
  gap: 10px;
  flex: none;
  height: 43px;
  padding: 0 7px 0 13px;
  background: #293133;
}

.props h3 {
  flex: 1;
  padding-bottom: 2px;
  font-size: 15px;
  color: #fff;
}

.props header svg {
  width: 18px;
}

.props header .balloon {
  width: 20px;
}

.props header button svg {
  width: 14px;
}

.props-tabs {
  display: flex;
  flex: none;
  height: 44px;
  padding: 8px 13px 0;
  background: #3a4042;
  font-size: 14px;
  color: #595f61;
}

.props-tabs button {
  width: 114px;
  padding-bottom: 2px;
  border-radius: 5px 5px 0 0;
}

.props-tabs .on {
  background: #5f6569;
  color: #fff;
  font-weight: 600;
}

.props-body {
  flex: 1;
  min-height: 0;
  overflow: hidden;
  padding-right: 7px;
  background: linear-gradient(#50565a, #50565a) right top / 7px 472px no-repeat;
}

.group {
  padding: 17px 16px 8px 22px;
  border-bottom: 1px solid #555b5f;
}

.composer {
  height: 66px;
  padding: 6px 8px;
  background: #444;
  color: #fff;
  font-size: 13px;
  line-height: 19px;
  white-space: nowrap;
  overflow: hidden;
}

.composer span {
  color: #5ba8f5;
}

.rich {
  display: block;
  height: 24px;
  font-size: 12px;
  line-height: 20px;
  text-align: right;
  color: #a3a9ab;
}

.row {
  display: flex;
  align-items: center;
  justify-content: space-between;
  height: 38px;
  padding-bottom: 3px;
  white-space: nowrap;
}

.props input,
.props select {
  height: 33px;
  border: none;
  border-radius: 1px;
  background: #50565a;
  color: #fff;
}

.props input[type="checkbox"] {
  appearance: none;
  width: 20px;
  height: 20px;
  margin-top: 2px;
}

.row.last {
  margin-top: 7px;
}

.props input:checked {
  background: #41474b;
}

.props input:checked::before {
  content: "";
  display: block;
  width: 11px;
  height: 6px;
  margin: 5px 0 0 4px;
  border: solid #fff;
  border-width: 0 0 3px 3px;
  transform: rotate(-45deg);
}

.row input[type="text"] {
  width: 66px;
  text-align: center;
}

.group.click {
  padding-top: 4px;
  padding-bottom: 16px;
}

.workflow {
  display: block;
  width: 100%;
  height: 39px;
  margin-top: 2px;
  padding-bottom: 2px;
  border: 1px solid #74797c;
  border-radius: 3px;
  background: #6a6f73;
  box-shadow: 0 1px 3px rgba(0, 0, 0, 0.2);
  font-size: 14px;
  color: #fff;
}

.group.style {
  padding-right: 15px;
  padding-bottom: 6px;
}

.field {
  display: flex;
  align-items: center;
  gap: 8px;
  white-space: nowrap;
}

.select {
  position: relative;
  width: 280px;
  margin-left: auto;
}

.select select {
  appearance: none;
  width: 100%;
  padding: 0 9px;
}

.select .caret {
  position: absolute;
  right: 12px;
  top: 15px;
  border-top-color: #9aa1a5;
}

.links {
  display: flex;
  justify-content: space-between;
  padding-left: 55px;
  line-height: 19px;
  padding-bottom: 1px;
  color: #a3a9ab;
}

.group.tooltip {
  padding-bottom: 17px;
}

.tooltip input {
  flex: 1;
  min-width: 0;
}

.group.visible {
  padding-top: 4px;
  padding-bottom: 7px;
}

.group.size {
  display: flex;
  gap: 21px;
  padding-right: 19px;
}

.size label {
  display: flex;
  flex: 1;
  align-items: center;
  justify-content: space-between;
}

.size input {
  width: 49px;
  text-align: center;
}

.reference {
  position: absolute;
  left: 1364px;
  top: 201px;
  height: 29px;
  padding: 0 12px 0 7px;
  border-radius: 4px;
  background: #8f8f8f;
  color: #fff;
  line-height: 28px;
  white-space: nowrap;
}

.reference b {
  margin-right: 2px;
  font-size: 16px;
}

.reference span {
  font-family: "DejaVu Sans", sans-serif;
  font-size: 16px;
}

.scribble {
  position: absolute;
  left: 988px;
  top: 144px;
  width: 380px;
  height: 124px;
  pointer-events: none;
}

.page-scroll {
  width: 8px;
  padding-top: 27px;
  background: #fff;
}

.page-scroll span {
  display: block;
  width: 6px;
  height: 254px;
  margin-left: 1px;
  background: #c1c1c1;
}

/* Windows taskbar */
.taskbar {
  display: flex;
  gap: 1px;
  height: 40px;
  background: linear-gradient(90deg, #21363f, #20333f 50%, #1a2744 85%);
  color: #fff;
  font-family: "Noto Sans", sans-serif;
}

.taskbar button {
  width: 48px;
  position: relative;
}

.taskbar button svg {
  width: 16px;
  margin: auto;
}

.taskbar button .big {
  width: 22px;
}

.taskbar .focus {
  background: #4b5d64;
}

.running::after {
  content: "";
  position: absolute;
  left: 4px;
  right: 4px;
  bottom: 0;
  height: 2px;
  background: #e2d6d6;
}

.running.focus::after {
  left: 0;
  right: 0;
}

.tray {
  display: flex;
  align-items: center;
  gap: 8px;
  margin-left: auto;
  margin-right: 4px;
  border-right: 1px solid #56617a;
  padding-right: 10px;
}

.tray svg {
  width: 16px;
}

.tray .chev {
  width: 12px;
}

.clock {
  width: 66px;
  font-size: 12px;
  line-height: 18px;
  text-align: center;
}

.notes {
  position: relative;
  width: 26px;
  margin-left: 6px;
}

.notes span {
  position: absolute;
  left: 5px;
  top: 6px;
  width: 20px;
  height: 18px;
  border: 1px solid #888;
  border-radius: 9px;
  background: #333b44;
  font-size: 11px;
  font-weight: 700;
  line-height: 16px;
  text-align: center;
}
```
